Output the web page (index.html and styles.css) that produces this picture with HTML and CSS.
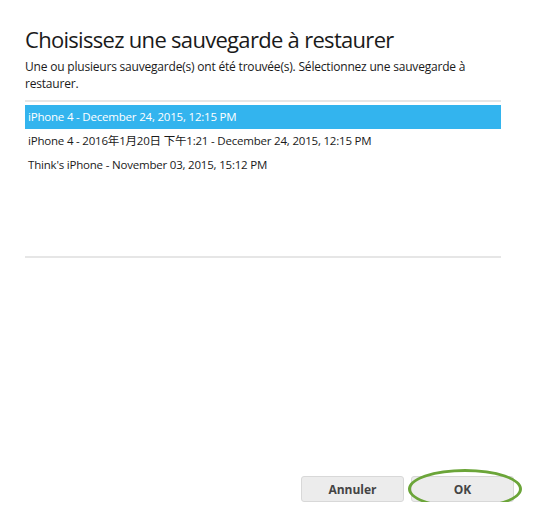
FILE: index.html
```html
<!DOCTYPE html>
<html lang="fr">
<head>
  <meta charset="UTF-8">
  <title>Choisissez une sauvegarde</title>
  <link rel="stylesheet" href="styles.css">
</head>
<body>
  <div class="dialog">
    <h1>Choisissez une sauvegarde à restaurer</h1>
    <p class="intro">Une ou plusieurs sauvegarde(s) ont été trouvée(s). Sélectionnez une sauvegarde à restaurer.</p>

    <ul class="backups">
      <li class="selected">iPhone 4 - December 24, 2015, 12:15 PM</li>
      <li>iPhone 4 - 2016年1月20日 下午1:21 - December 24, 2015, 12:15 PM</li>
      <li>Think's iPhone - November 03, 2015, 15:12 PM</li>
    </ul>

    <div class="actions">
      <button class="btn">Annuler</button>
      <button class="btn btn-ok">OK</button>
    </div>
  </div>
</body>
</html>
```

FILE: styles.css
```css
body {
  margin: 0;
  background: #fff;
  font-family: 'Open Sans', 'Noto Sans CJK SC', sans-serif;
  color: #1a1a1a;
}
.dialog {
  width: 476px;
  margin-left: 25px;
  padding-top: 22px;
  height: 480px;
  display: flex;
  flex-direction: column;
}
h1 {
  margin: 0;
  font-size: 22px;
  font-weight: 400;
  line-height: 34px;
  letter-spacing: -0.7px;
}
.intro {
  margin: 2px 0 0;
  font-size: 12px;
  line-height: 17px;
  letter-spacing: -0.2px;
  width: 470px;
}
.backups {
  list-style: none;
  margin: 8px 0 0;
  padding: 3px 0 0;
  border-top: 2px solid #e6e6e6;
  border-bottom: 2px solid #e6e6e6;
  height: 151px;
}
.backups li {
  font-size: 11.5px;
  line-height: 24px;
  letter-spacing: -0.2px;
  padding-left: 3px;
  white-space: nowrap;
}
.backups li.selected {
  background: #33b4ee;
  color: #fff;
}
.actions {
  margin-top: auto;
  display: flex;
  justify-content: flex-end;
  gap: 7px;
  margin-right: -13px;
}
.btn {
  width: 103px;
  height: 26px;
  border: 1px solid #d8d8d8;
  border-radius: 3px;
  background: #ececec;
  font-family: 'Open Sans', sans-serif;
  font-size: 12px;
  font-weight: 700;
  color: #444;
}
.btn-ok {
  position: relative;
}
.btn-ok::after {
  content: "";
  position: absolute;
  left: -4px;
  top: -8px;
  width: 108px;
  height: 34px;
  border: 3px solid #6ba539;
  border-radius: 50%;
}
```
